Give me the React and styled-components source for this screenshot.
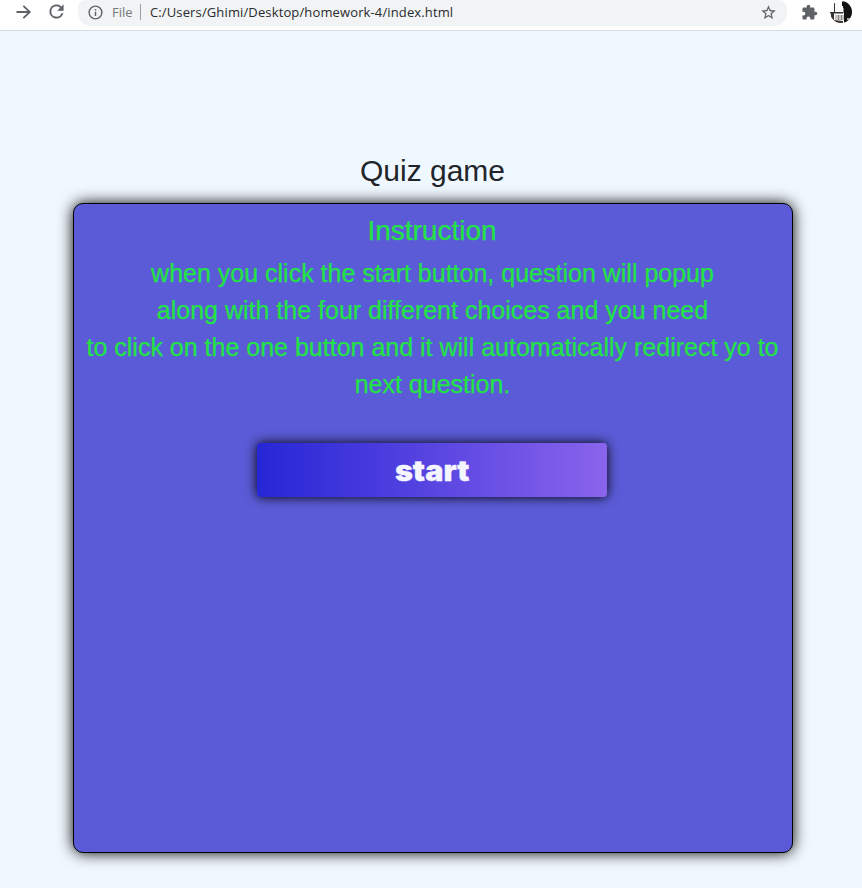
import React from "react";
import styled, { createGlobalStyle } from "styled-components";

const GlobalStyle = createGlobalStyle`
  * { box-sizing: border-box; }
  body { margin: 0; background: #f0f8ff; font-family: "Liberation Sans", Arial, sans-serif; }
`;

const Page = styled.div`
  height: 888px;
  overflow: hidden;
  display: flex;
  flex-direction: column;
`;

const Toolbar = styled.header`
  height: 31px;
  flex: none;
  display: flex;
  align-items: flex-start;
  padding-left: 14px;
  background: #fff;
  border-bottom: 1px solid #d8dade;
`;

const Icon = styled.svg`
  display: block;
  flex: none;
  width: ${(p) => p.$size}px;
  height: ${(p) => p.$size}px;
  margin-top: ${(p) => p.$top}px;
  margin-left: ${(p) => p.$left || 0}px;
  fill: #5f6368;
  stroke: #5f6368;
  stroke-width: ${(p) => p.$weight || 0};
`;

const AddressBar = styled.div`
  width: 709px;
  height: 26px;
  margin-left: 11px;
  padding-right: 10px;
  border-radius: 8px 8px 13px 13px;
  background: #f1f3f4;
  display: flex;
  align-items: flex-start;
  font: 13px/18px "Open Sans", "Noto Sans", sans-serif;
  white-space: nowrap;
`;

const Scheme = styled.span`
  width: 28px;
  margin: 3px 0 0 8px;
  color: #74787c;
`;

const Divider = styled.span`
  width: 1px;
  height: 16px;
  margin-top: 4px;
  background: #9a9da1;
`;

const Address = styled.span`
  flex: 1;
  margin: 3px 0 0 9px;
  color: #292b2e;
  letter-spacing: 0.13px;
`;

const Main = styled.main`
  display: flex;
  flex-direction: column;
  align-items: center;
  padding: 122px 0 0 4px;
`;

const Title = styled.h1`
  margin: 0 1px 14px 0;
  font-size: 30px;
  line-height: 36px;
  font-weight: 400;
  color: #212529;
`;

const Card = styled.section`
  width: 720px;
  height: 650px;
  padding-right: 2px;
  border: 1px solid #000;
  border-radius: 10px;
  background: #5b5bd7;
  box-shadow: 0 0 15px #000;
  display: flex;
  flex-direction: column;
  align-items: center;
  color: #22e345;
  text-align: center;
  -webkit-text-stroke: 0.25px #22e345;
`;

const Heading = styled.h2`
  margin: 11px 0 0;
  font-size: 28px;
  line-height: 32px;
  font-weight: 400;
`;

const Instructions = styled.p`
  margin: 8px 0 0;
  padding-left: 1px;
  font-size: 25px;
  line-height: 37px;
  white-space: nowrap;
`;

const StartButton = styled.button`
  width: 350px;
  height: 54px;
  margin: 40px 0 0;
  padding: 2px 0 0;
  border: 0;
  border-radius: 4px;
  background: linear-gradient(90deg, #2626d6, #8a64ec);
  box-shadow: 0 0 12px #000;
  color: #f5f5ff;
  font: 900 28px/34px Inter, "Liberation Sans", sans-serif;
  -webkit-text-stroke: 0.3px #f5f5ff;
`;

const WideLabel = styled.span`
  display: inline-block;
  transform: scaleX(1.09);
`;

const ForwardIcon = () => (
  <Icon $size={20} $top={2} viewBox="0 0 24 24">
    <path d="M12 4l-1.500 1.500 5.500 5.400H3v2.200h13l-5.500 5.400L12 20l8.500-8z" />
  </Icon>
);

const ReloadIcon = () => (
  <Icon $size={21} $top={1} $left={12} $weight={0.2} viewBox="0 0 24 24">
    <path d="M17.65 6.35A7.96 7.96 0 0 0 12 4a8 8 0 1 0 7.73 10h-2.08A6 6 0 1 1 12 6c1.66 0 3.14.69 4.22 1.78L13 11h7V4z" />
  </Icon>
);

const InfoIcon = () => (
  <Icon $size={17} $top={4} $left={9} viewBox="0 0 24 24">
    <path d="M11 7h2v2h-2zm0 4h2v6h-2zm1-9a10 10 0 1 0 0 20 10 10 0 0 0 0-20zm0 18a8 8 0 1 1 0-16 8 8 0 0 1 0 16z" />
  </Icon>
);

const StarIcon = () => (
  <Icon $size={17} $top={4} $weight={0.2} viewBox="0 0 24 24">
    <path d="M22 9.24l-7.19-.62L12 2 9.19 8.63 2 9.24l5.46 4.73L5.82 21 12 17.27 18.18 21l-1.63-7.03zM12 15.4l-3.76 2.27 1-4.28-3.32-2.88 4.38-.38L12 6.1l1.71 4.04 4.38.38-3.32 2.88 1 4.28z" />
  </Icon>
);

const ExtensionIcon = () => (
  <Icon $size={17} $top={4} $left={14} viewBox="0 0 24 24">
    <path d="M20.5 11H19V7a2 2 0 0 0-2-2h-4V3.500a2.500 2.500 0 0 0-5 0V5H4a2 2 0 0 0-2 2v3.800h1.500a2.700 2.700 0 0 1 0 5.400H2V20a2 2 0 0 0 2 2h3.800v-1.500a2.700 2.700 0 0 1 5.400 0V22H17a2 2 0 0 0 2-2v-4h1.500a2.500 2.500 0 0 0 0-5z" />
  </Icon>
);

const Avatar = () => (
  <Icon $size={22} $top={1} $left={12} viewBox="0 0 22 22">
    <defs>
      <clipPath id="avatarCircle"><circle cx="11" cy="11" r="11" /></clipPath>
    </defs>
    <g clipPath="url(#avatarCircle)">
      <path fill="#fafafa" d="M0 0h22v22H0z" />
      <path fill="#151212" d="M13 0h9v22h-8V12h-1V5h-1V1z" />
      <path fill="#363232" d="M4 2h1v10H4zM0 11h13v1.500H0zM1 12h3v7H1zM4 19l9 1v2H5z" />
      <path fill="#c6c4c1" d="M5 14h9v5H5z" />
      <path fill="#888" d="M8 14h1v5H8zM11 14h1v5h-1zM13 7h1v5h-1z" />
      <path fill="#aaa" d="M17 17h3v2h-3z" />
    </g>
  </Icon>
);

export default function App() {
  return (
    <>
      <GlobalStyle />
      <Page>
        <Toolbar>
          <ForwardIcon />
          <ReloadIcon />
          <AddressBar>
            <InfoIcon />
            <Scheme>File</Scheme>
            <Divider />
            <Address>C:/Users/Ghimi/Desktop/homework-4/index.html</Address>
            <StarIcon />
          </AddressBar>
          <ExtensionIcon />
          <Avatar />
        </Toolbar>
        <Main>
          <Title>Quiz game</Title>
          <Card>
            <Heading>Instruction</Heading>
            <Instructions>
              when you click the start button, question will popup<br />
              along with the four different choices and you need<br />
              to click on the one button and it will automatically redirect yo to<br />
              next question.
            </Instructions>
            <StartButton><WideLabel>start</WideLabel></StartButton>
          </Card>
        </Main>
      </Page>
    </>
  );
}
